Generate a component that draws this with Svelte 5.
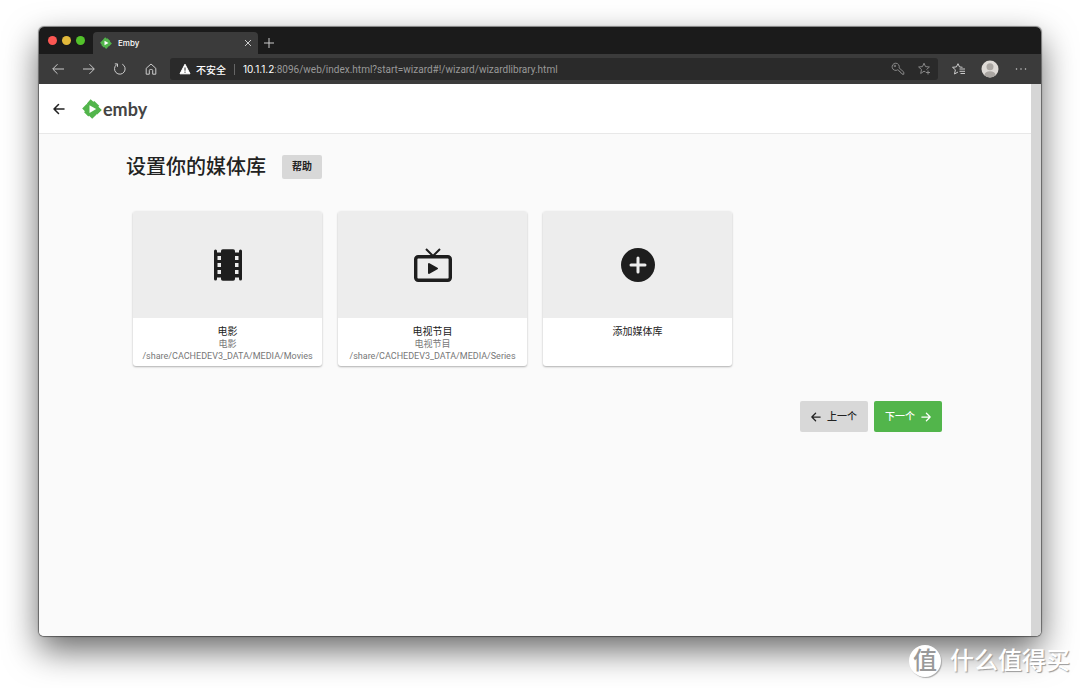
<script>
	let path = $state(':8096/web/index.html?start=wizard#!/wizard/wizardlibrary.html');
	let libraries = [
		{ name: '电影', type: '电影', folder: '/share/CACHEDEV3_DATA/MEDIA/Movies', icon: 'movies' },
		{ name: '电视节目', type: '电视节目', folder: '/share/CACHEDEV3_DATA/MEDIA/Series', icon: 'tv' },
		{ name: '添加媒体库', icon: 'add' }
	];
</script>

{#snippet logo()}
	<svg class="logo-mark" viewBox="0 0 20 20" aria-hidden="true">
		<path fill="#52b54b" d="M8.600 .3l2.800 2.500.9-.8 4.900 4.800-.8.9 3.400 3.300-4.600 4.400-.8-.7.200.9-4.400 4.200-3.100-3-.8.700-4.200-4.300.8-.9L.2 9.400l4.400-4.500.8.700-.5-1z" />
		<path fill="#fff" d="M7.500 6.300v7.600l6.700-3.800z" />
	</svg>
{/snippet}

{#snippet arrow(right)}
	<svg class="arrow" viewBox="0 0 12 12" aria-hidden="true">
		{#if right}
			<path d="M1 6h10M6.500 1.500L11 6l-4.500 4.500" />
		{:else}
			<path d="M11 6H1M5.500 1.500L1 6l4.500 4.500" />
		{/if}
	</svg>
{/snippet}

<div class="window">
	<div class="tab-strip">
		<div class="lights"><i class="red"></i><i class="yellow"></i><i class="green"></i></div>
		<div class="tab">
			{@render logo()}
			<span>Emby</span>
			<button class="plain" aria-label="Close tab">
				<svg class="close" viewBox="0 0 8 8"><path d="M1 1l6 6M7 1L1 7" /></svg>
			</button>
		</div>
		<button class="plain new-tab" aria-label="New tab">
			<svg viewBox="0 0 10 10"><path d="M5 0v10M0 5h10" /></svg>
		</button>
	</div>

	<div class="toolbar">
		<button class="plain" aria-label="Back">
			<svg viewBox="0 0 16 16"><path d="M14 8H3M7.500 3.200L2.700 8l4.800 4.800" /></svg>
		</button>
		<button class="plain" aria-label="Forward">
			<svg viewBox="0 0 16 16"><path d="M2 8h11M8.500 3.200L13.300 8l-4.800 4.800" /></svg>
		</button>
		<button class="plain" aria-label="Reload">
			<svg viewBox="0 0 16 16"><path d="M10.300 3.200a5.300 5.300 0 1 1-5.600.4M2.800 2.900h2.700v2.900" /></svg>
		</button>
		<button class="plain" aria-label="Home">
			<svg viewBox="0 0 16 16"><path d="M3.200 7.300L8 3l4.800 4.300v5.900H9.700V9.500a1 1 0 0 0-1-1H7.300a1 1 0 0 0-1 1v3.700H3.200z" /></svg>
		</button>
		<div class="address">
			<svg class="warning" viewBox="0 0 12 12" aria-hidden="true">
				<path class="solid" d="M6 1.200L11 10.800H1z" />
				<path class="mark" d="M6 4.500v3.200M6 8.600v1.200" />
			</svg>
			<b class="insecure">不安全</b>
			<span class="divider"></span>
			<label class="host" for="url">10.1.1.2</label>
			<input id="url" type="text" spellcheck="false" bind:value={path} />
			<button class="plain dim" aria-label="Passwords">
				<svg viewBox="0 0 16 16"><path d="M5.800 2.200a3.600 3.600 0 1 0 1.900 6.600l.9.400.5 1.100 1.100.3.400 1.200 1 .3.400 1 1.800.2v-2.200L9.100 6.900A3.600 3.600 0 0 0 5.800 2.200z" /><circle cx="4.900" cy="4.900" r=".8" /></svg>
			</button>
			<button class="plain dim" aria-label="Add to favourites">
				<svg viewBox="0 0 16 16"><path d="M9.500 10.900L8 10.200l-3.300 2.300.8-4L2.600 6l3.900-.4L8 2.200l1.500 3.400 3.900.4-2.900 2.500M12 9.500v4M10 11.500h4" /></svg>
			</button>
		</div>
		<button class="plain" aria-label="Favourites">
			<svg viewBox="0 0 16 16"><path d="M7 11l-3.500 2 .9-4.200L1.500 6.300l3.900-.4L7 2.700l1.500 3.200 3 .4M8.500 8H14M8.500 10.300H14M9.500 12.500H14" /></svg>
		</button>
		<button class="plain profile" aria-label="Profile">
			<svg class="avatar" viewBox="0 0 18 18">
				<circle class="face" cx="9" cy="9" r="8.500" />
				<circle class="person" cx="9" cy="6.800" r="3.500" />
				<path class="person" d="M3.300 15.300c.6-3 2.500-4 5.700-4s5.100 1 5.700 4A8.500 8.500 0 0 1 3.300 15.300z" />
			</svg>
		</button>
		<button class="plain" aria-label="More">
			<svg viewBox="0 0 16 16"><path class="dots" d="M3.500 8h.01M8 8h.01M12.500 8h.01" /></svg>
		</button>
	</div>

	<div class="viewport">
		<div class="page">
			<header>
				<button class="plain" aria-label="返回">{@render arrow(false)}</button>
				<a class="brand" href="#home">{@render logo()}<span>emby</span></a>
			</header>

			<main>
				<div class="title">
					<h1>设置你的媒体库</h1>
					<button class="raised help">帮助</button>
				</div>

				<div class="cards">
					{#each libraries as library}
						<button class="card">
							<span class="cover">
								{#if library.icon === 'movies'}
									<svg class="movies" viewBox="0 0 28 32">
										<path fill-rule="evenodd" d="M1.500.5A1.500 1.500 0 0 1 3 2v1.500h4V2A1.800 1.800 0 0 1 8.800.2h10.400A1.800 1.800 0 0 1 21 2v1.500h4V2a1.500 1.500 0 0 1 3 0v28a1.500 1.500 0 0 1-3 0v-1.500h-4V30a1.800 1.800 0 0 1-1.800 1.800H8.800A1.800 1.800 0 0 1 7 30v-1.500H3V30a1.500 1.500 0 0 1-3 0V2A1.500 1.500 0 0 1 1.500.5zM3.500 7v4H7V7zM3.500 14v4H7v-4zM3.500 21v4H7v-4zM21 7v4h3.500V7zM21 14v4h3.500v-4zM21 21v4h3.500v-4z" />
									</svg>
								{:else if library.icon === 'tv'}
									<svg class="tv" viewBox="0 0 38 34">
										<rect x="1.700" y="8.700" width="34.600" height="23.600" rx="2.500" />
										<path class="aerial" d="M12 1l7 7 7-7" />
										<path class="play" d="M15 16v9l8-4.500z" />
									</svg>
								{:else}
									<svg class="add" viewBox="0 0 34 34">
										<circle cx="17" cy="17" r="17" />
										<path d="M17 10v14M10 17h14" />
									</svg>
								{/if}
							</span>
							<span class="details">
								<span class="name">{library.name}</span>
								{#if library.folder}
									<span>{library.type}</span>
									<span>{library.folder}</span>
								{/if}
							</span>
						</button>
					{/each}
				</div>

				<div class="steps">
					<button class="raised">{@render arrow(false)}上一个</button>
					<button class="raised next">下一个{@render arrow(true)}</button>
				</div>
			</main>
		</div>
	</div>
</div>

<div class="watermark"><span class="seal">值</span>什么值得买</div>

<style>
	:global(body) {
		background: #fff;
	}

	:global(#app) {
		box-sizing: border-box;
		display: flex;
		position: relative;
		min-height: 100vh;
		padding: 27px 39px 52px;
		font-family: Roboto, "Noto Sans CJK SC", sans-serif;
	}

	.window {
		flex: 1;
		min-width: 0;
		display: flex;
		flex-direction: column;
		border-radius: 5px;
		overflow: hidden;
		box-shadow: 0 0 1px 1px rgba(0, 0, 0, 0.45), 0 14px 34px rgba(0, 0, 0, 0.6);
	}

	button {
		border: 0;
		font-family: inherit;
		cursor: pointer;
	}

	.plain {
		display: flex;
		padding: 0;
		background: none;
	}

	svg {
		display: block;
		width: 16px;
		height: 16px;
		fill: none;
		stroke: #ccc;
	}

	.logo-mark {
		width: 12px;
		height: 12px;
		stroke: none;
	}

	.tab-strip {
		display: flex;
		align-items: flex-end;
		height: 27px;
		background: #1b1b1b;
	}

	.lights {
		display: flex;
		align-self: center;
		gap: 5px;
		padding: 0 8px 0 9px;
	}

	.lights i {
		width: 9px;
		height: 9px;
		border-radius: 50%;
	}

	.red { background: #fc5753; }
	.yellow { background: #e2b93b; }
	.green { background: #53c22b; }

	.tab {
		box-sizing: border-box;
		display: flex;
		align-items: center;
		gap: 6px;
		width: 165px;
		height: 22px;
		padding: 0 6px 0 7px;
		border-radius: 4px 4px 0 0;
		background: #3b3b3b;
		color: #fff;
		font: 500 8px Inter, sans-serif;
	}

	.tab span {
		flex: 1;
	}

	.close {
		width: 8px;
		height: 8px;
	}

	.new-tab {
		align-self: center;
		padding: 4px 6px 0;
	}

	.new-tab svg {
		width: 10px;
		height: 10px;
	}

	.toolbar {
		display: flex;
		align-items: center;
		gap: 15px;
		height: 30px;
		padding: 0 12px 0 11px;
		background: #3b3b3b;
	}

	.address {
		flex: 1;
		min-width: 0;
		box-sizing: border-box;
		display: flex;
		align-items: center;
		height: 22px;
		margin: 0 -2px 0 -4px;
		padding: 0 6px 0 9px;
		border-radius: 3px;
		background: #2a2a2a;
		color: #fff;
		font: 10px Inter, "Noto Sans CJK SC", sans-serif;
	}

	.warning {
		width: 12px;
		height: 12px;
	}

	.warning .solid {
		fill: #fff;
		stroke: #fff;
	}

	.warning .mark {
		stroke: #2a2a2a;
	}

	.insecure {
		margin-left: 5px;
		font-weight: 500;
	}

	.divider {
		width: 1px;
		height: 11px;
		margin: 0 8px;
		background: #666;
	}

	input {
		flex: 1;
		min-width: 0;
		padding: 0;
		border: 0;
		outline: 0;
		background: none;
		color: #999;
		font: 10px Roboto, sans-serif;
	}

	.dim {
		margin-left: 10px;
	}

	.dim svg {
		stroke: #888;
	}

	.profile {
		margin: 0 -1px;
	}

	.avatar {
		width: 18px;
		height: 18px;
		stroke: none;
	}

	.face { fill: #dedad6; }
	.person { fill: #aaa6a2; }

	.dots {
		stroke-width: 1.5;
		stroke-linecap: round;
	}

	.viewport {
		flex: 1;
		display: flex;
		padding-right: 10px;
		background: #d6d6d6;
	}

	.page {
		flex: 1;
		min-width: 0;
		background: #fafafa;
	}

	header {
		display: flex;
		align-items: center;
		gap: 17px;
		height: 49px;
		padding: 0 14px;
		border-bottom: 1px solid #e8e8e8;
		background: #fff;
	}

	.arrow {
		width: 12px;
		height: 12px;
		stroke: #222;
		stroke-width: 1.5;
		stroke-linecap: round;
		stroke-linejoin: round;
	}

	.brand {
		display: flex;
		align-items: center;
		gap: 1px;
		color: #444;
		font: 700 18px/20px Lato, sans-serif;
		text-decoration: none;
	}

	.brand .logo-mark {
		width: 20px;
		height: 20px;
	}

	main {
		max-width: 1200px;
		margin: 0 auto;
		padding: 19px 87px;
		color: #222;
	}

	.title {
		display: flex;
		align-items: center;
		gap: 16px;
	}

	h1 {
		margin: 0;
		font-size: 20px;
		line-height: 28px;
		font-weight: 500;
	}

	.raised {
		display: flex;
		align-items: center;
		gap: 6px;
		height: 31px;
		padding: 0 10px;
		border-radius: 2px;
		background: #d8d8d8;
		color: #222;
		font-size: 10px;
		line-height: 12px;
		font-weight: 500;
	}

	.raised .arrow {
		width: 10px;
		height: 10px;
	}

	.help {
		height: 24px;
		font-weight: 700;
	}

	.cards {
		display: grid;
		grid-template-columns: repeat(4, 1fr);
		gap: 16px;
		margin: 30px 7px 35px;
	}

	.card {
		display: flex;
		flex-direction: column;
		min-width: 0;
		padding: 0;
		border-radius: 3px;
		overflow: hidden;
		background: #fff;
		box-shadow: 0 1px 2px rgba(0, 0, 0, 0.3);
	}

	.cover {
		display: grid;
		place-items: center;
		width: 100%;
		height: 107px;
		background: #ededed;
	}

	.cover svg {
		fill: #1e1e1e;
		stroke: none;
	}

	.cover .movies {
		width: 28px;
		height: 32px;
	}

	.cover .tv {
		width: 38px;
		height: 34px;
		fill: none;
		stroke: #1e1e1e;
		stroke-width: 3.4;
	}

	.tv .aerial {
		stroke-width: 2;
	}

	.tv .play {
		fill: #1e1e1e;
		stroke-width: 2;
		stroke-linejoin: round;
	}

	.cover .add {
		width: 34px;
		height: 34px;
	}

	.add path {
		stroke: #ededed;
		stroke-width: 3;
		stroke-linecap: round;
	}

	.details {
		display: flex;
		flex-direction: column;
		width: 100%;
		padding: 8px 0 4px;
		color: #777;
		font-size: 9px;
		line-height: 12px;
	}

	.details .name {
		color: #222;
		font-size: 10px;
	}

	.steps {
		display: flex;
		justify-content: flex-end;
		gap: 6px;
		padding-right: 2px;
	}

	.steps .raised {
		padding: 0 11px;
	}

	.steps .next {
		background: #52b54b;
		color: #fff;
	}

	.next .arrow {
		stroke: #fff;
	}

	.watermark {
		position: absolute;
		right: 10px;
		bottom: 10px;
		display: flex;
		align-items: center;
		gap: 9px;
		color: #fff;
		font-size: 24px;
		line-height: 34px;
		font-weight: 500;
		text-shadow: 1px 1px 1px #999;
	}

	.seal {
		width: 32px;
		height: 32px;
		border-radius: 50%;
		background: #fff;
		box-shadow: 1px 1px 1px #aaa;
		color: #999;
		line-height: 32px;
		text-align: center;
		text-shadow: none;
	}
</style>
